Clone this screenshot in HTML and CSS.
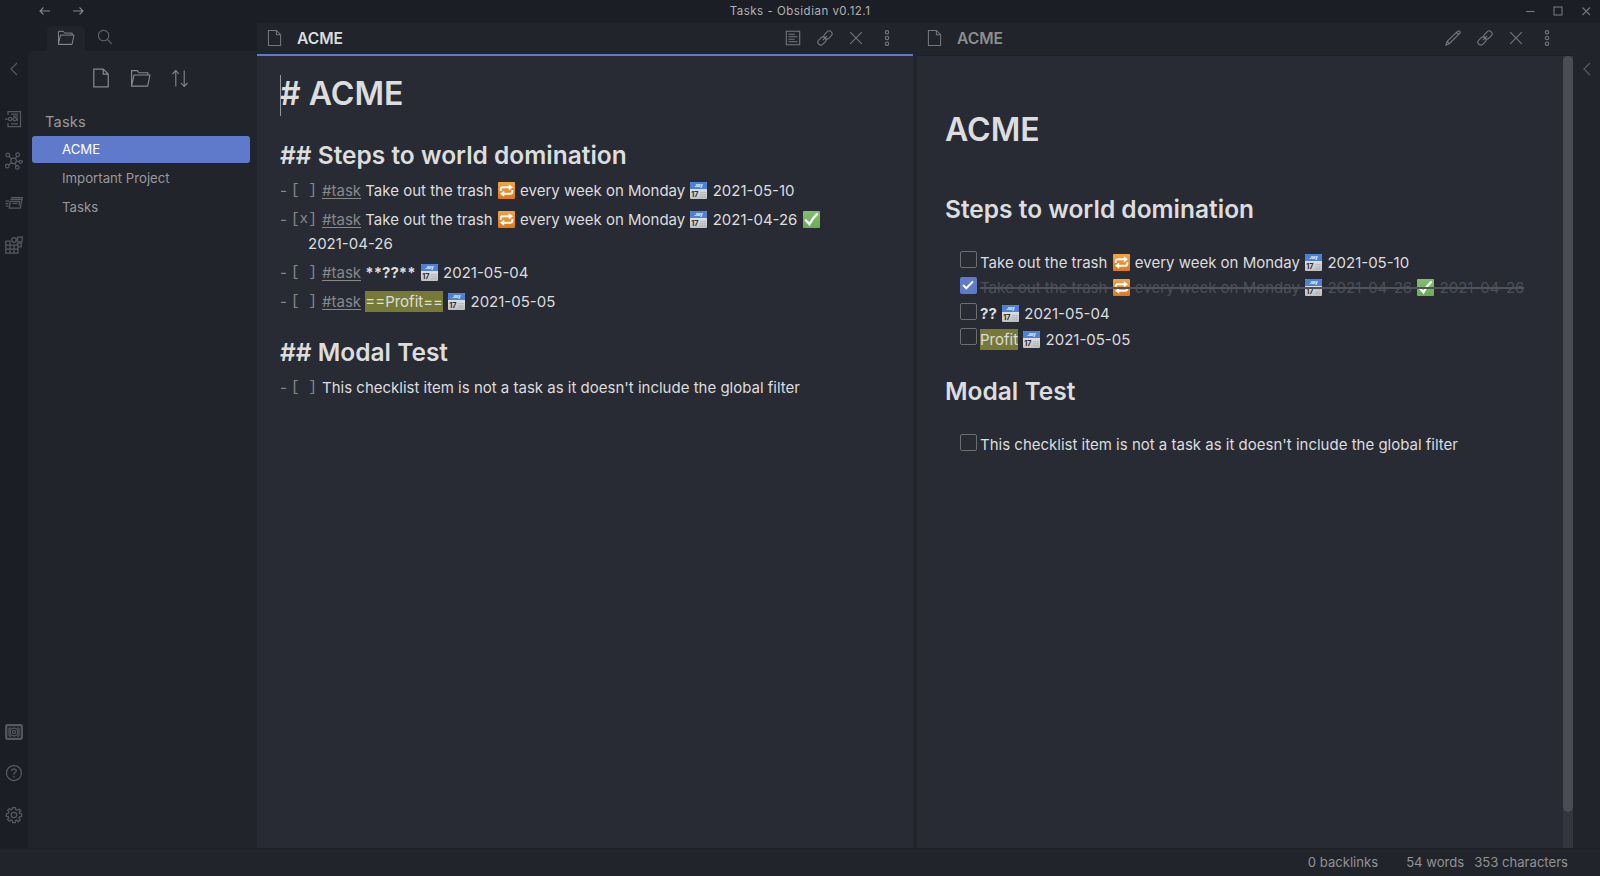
FILE: index.html
```html
<!DOCTYPE html>
<html lang="en">
<head>
<meta charset="utf-8">
<title>Tasks - Obsidian v0.12.1</title>
<link rel="stylesheet" href="styles.css">
</head>
<body>
<svg class="defs" width="0" height="0">
  <defs>
    <linearGradient id="orange" x2="0" y2="1"><stop stop-color="#f0a544"/><stop offset="1" stop-color="#e0781a"/></linearGradient>
    <linearGradient id="green" x2="0" y2="1"><stop stop-color="#83bd72"/><stop offset="1" stop-color="#68ae50"/></linearGradient>
    <linearGradient id="paper" x2="0" y2="1"><stop stop-color="#f4f4f4"/><stop offset="1" stop-color="#bfc0c2"/></linearGradient>
    <symbol id="repeat" viewBox="0 0 17 17"><rect width="17" height="17" rx="1" fill="url(#orange)"/><g fill="none" stroke="#fff" stroke-width="1.9"><path d="M2.7 9V7.6Q2.7 5.3 5 5.3H11.5"/><path d="M14.3 8V9.4Q14.3 11.7 12 11.7H5.5"/></g><path d="M10.8 2.2 15 5.3 10.8 8.4ZM6.2 8.6 2 11.7 6.2 14.8Z" fill="#fff"/></symbol>
    <symbol id="calendar" viewBox="0 0 17 17"><rect width="17" height="17" rx="1" fill="url(#paper)"/><path d="M1 0H16Q17 0 17 1V7H0V1Q0 0 1 0" fill="#4b82d8"/><text x="8.5" y="5" text-anchor="middle" class="cal-month">July</text><text x="1.2" y="15" class="cal-day">17</text><path d="M10.5 10.5H16M10.5 12.7H16M10.5 14.8H16" stroke="#96979a" stroke-width=".7" stroke-dasharray="1 .7"/></symbol>
    <symbol id="done" viewBox="0 0 17 17"><rect width="17" height="17" rx="1" fill="url(#green)"/><path d="M2.8 9.3 6.5 13.2Q9 8 14 3.2" fill="none" stroke="#fff" stroke-width="2.3" stroke-linecap="round"/></symbol>
    <symbol id="file" viewBox="0 0 16 18"><path d="M1.5 1H10L14.5 5.5V17H1.5ZM10 1V5.5H14.5"/></symbol>
    <symbol id="folder" viewBox="0 0 20 18"><path d="M1.5 16.2V1.5H7L8.5 3.5H17V5.7M1.5 16.2 3.8 5.7H19L16.8 16.2ZM1.5 16.2H16.8"/></symbol>
    <symbol id="link" viewBox="0 0 16 16"><g transform="rotate(-45 8 8)"><rect x="-.8" y="5.1" width="9" height="5.8" rx="2.9"/><rect x="7.8" y="5.1" width="9" height="5.8" rx="2.9"/><path d="M5 8H11"/></g></symbol>
    <symbol id="close" viewBox="0 0 16 16"><path d="M2.2 2.2 13.8 13.8M13.8 2.2 2.2 13.8"/></symbol>
    <symbol id="more" viewBox="0 0 16 16"><circle cx="8" cy="2.3" r="1.7"/><circle cx="8" cy="8" r="1.7"/><circle cx="8" cy="13.7" r="1.7"/></symbol>
    <symbol id="left" viewBox="0 0 8 14"><path d="M7 1 1 7 7 13"/></symbol>
  </defs>
</svg>

<header class="titlebar">
  <div class="nav">
    <svg class="icon" width="12" height="10" viewBox="0 0 12 10"><path d="M11 5H1M4.5 1.5 1 5 4.5 8.5"/></svg>
    <svg class="icon" width="12" height="10" viewBox="0 0 12 10"><path d="M1 5H11M7.5 1.5 11 5 7.5 8.5"/></svg>
  </div>
  <div class="title">Tasks - Obsidian v0.12.1</div>
  <div class="window-buttons">
    <svg class="icon" width="10" height="10" viewBox="0 0 10 10"><path d="M1 5.5H9.5"/></svg>
    <svg class="icon" width="10" height="10" viewBox="0 0 10 10"><rect x="1" y="1" width="8" height="8"/></svg>
    <svg class="icon" width="10" height="10" viewBox="0 0 10 10"><path d="M1.5 1.5 9 9M9 1.5 1.5 9"/></svg>
  </div>
</header>

<main class="workspace">
  <nav class="ribbon">
    <svg class="icon collapse" width="8" height="14"><use href="#left"/></svg>
    <div class="ribbon-top">
      <svg class="icon" width="18" height="18" viewBox="0 0 18 18"><path d="M3 5V1.5H15.5V16.5H3V13M6 4H13M8 6.2H13M6 13.8H13M0 9H3.5M12.3 7.5V11M7 9H8"/><circle cx="5.2" cy="9" r="1.7"/><circle cx="9.8" cy="9.2" r="1.7"/></svg>
      <svg class="icon" width="18" height="18" viewBox="0 0 18 18"><circle cx="8.6" cy="8.8" r="2.8"/><circle cx="2.8" cy="3" r="1.8"/><circle cx="12.7" cy="2.7" r="1.8"/><circle cx="15.8" cy="9.8" r="1.5"/><circle cx="2.3" cy="14" r="1.8"/><circle cx="12.3" cy="15.4" r="1.8"/><path d="M4 4.4 6.5 6.8M11.8 4.3 10.2 6.6M11.5 9.2 14.3 9.6M6.6 11 3.8 12.8M9.8 11.4 11.5 13.8"/></svg>
      <svg class="icon" width="18" height="18" viewBox="0 0 18 18"><path d="M6 3.5H17.3L15.3 14H4.3L5.3 7.3H14.7L14 11.5M5.5 5.4H17M7.5 9.3H12.5M.5 7H4M.5 9.5H3.5M1 12H3.5"/></svg>
      <svg class="icon" width="18" height="18" viewBox="0 0 18 18"><path d="M.8 5H5V17H.8ZM5 9.2H13V17H5M9 9.2V17M.8 9.2H5M.8 13H13M12.4 1.3 17.3 1 17 5.6 12.8 5.9ZM12.4 7.5 16 7 16.5 10.6 13.5 11.2Z"/><circle cx="9" cy="4" r="2.3"/></svg>
    </div>
    <div class="ribbon-bottom">
      <svg class="icon" width="18" height="16" viewBox="0 0 18 16"><rect x="1.2" y="1.2" width="15.6" height="13.6" rx="1" stroke-width="2.2"/><path d="M4 4V12M14 4V12M4 4H6M4 12H6M12 4H14M12 12H14"/><circle cx="9" cy="8" r="3.8"/><circle cx="9" cy="8" r="1.6"/></svg>
      <svg class="icon" width="18" height="18" viewBox="0 0 18 18"><circle cx="9" cy="9" r="7.5"/><path d="M6.7 7Q6.8 4.8 9 4.8T11.3 7Q11.3 8.2 9 9.3V11M9 12V13.5"/></svg>
      <svg class="icon" width="18" height="18" viewBox="0 0 18 18"><circle cx="9" cy="9" r="2.7"/><path d="M7.6 1.5H10.4L10.8 3.7 12.2 4.3 14.1 3 15.9 4.8 14.1 6.5 14.5 7.4 16.6 7.7V10.4L14.5 10.8 13.9 12.1 15.2 14 13.3 15.8 11.8 14.1 10.6 14.6 10.3 16.6H7.7L7.3 14.5 6 14 4.3 15.2 2.5 13.5 3.8 11.9 3.4 10.7 1.4 10.4V7.7L3.5 7.3 4 6 2.7 4.3 4.5 2.6 6.1 3.9 7.2 3.4Z"/></svg>
    </div>
  </nav>

  <aside class="sidebar">
    <div class="tabs">
      <div class="tab active"><svg class="icon" width="18" height="16"><use href="#folder"/></svg></div>
      <div class="tab"><svg class="icon" width="16" height="16" viewBox="0 0 16 16"><circle cx="6.6" cy="6.6" r="5.2"/><path d="M10.5 10.5 14.8 14.8"/></svg></div>
    </div>
    <div class="files">
      <div class="file-actions">
        <svg class="icon" width="18" height="20"><use href="#file"/></svg>
        <svg class="icon" width="21" height="19"><use href="#folder"/></svg>
        <svg class="icon" width="18" height="19" viewBox="0 0 18 19"><path d="M4.8 17.5V1.5M1.5 5 4.8 1.5 8 5M13.2 1.5V17.5M10 14 13.2 17.5 16.5 14"/></svg>
      </div>
      <div class="vault">Tasks</div>
      <div class="file selected">ACME</div>
      <div class="file">Important Project</div>
      <div class="file">Tasks</div>
    </div>
  </aside>

  <section class="pane editing">
    <div class="pane-head">
      <svg class="icon" width="15" height="18"><use href="#file"/></svg>
      <span class="pane-title">ACME</span>
      <div class="pane-actions">
        <svg class="icon" width="16" height="16" viewBox="0 0 16 16"><path d="M1.3 1.3H14.7V14.7H1.3ZM3.5 4.2H10M3.5 6.7H12.5M3.5 9.2H9.5M3.5 11.7H12.5"/></svg>
        <svg class="icon" width="16" height="16"><use href="#link"/></svg>
        <svg class="icon" width="16" height="16"><use href="#close"/></svg>
        <svg class="icon" width="16" height="16"><use href="#more"/></svg>
      </div>
    </div>
    <div class="source">
      <div class="line h1"><span class="caret"></span># ACME</div>
      <div class="line h2">## Steps to world domination</div>
      <div class="line"><span class="mark">-<code>[ ]</code></span><u>#task</u> Take out the trash <svg class="emoji"><use href="#repeat"/></svg> every week on Monday <svg class="emoji"><use href="#calendar"/></svg> 2021-05-10</div>
      <div class="line"><span class="mark">-<code>[x]</code></span><u>#task</u> Take out the trash <svg class="emoji"><use href="#repeat"/></svg> every week on Monday <svg class="emoji"><use href="#calendar"/></svg> 2021-04-26 <svg class="emoji"><use href="#done"/></svg></div>
      <div class="line wrapped">2021-04-26</div>
      <div class="line"><span class="mark">-<code>[ ]</code></span><u>#task</u> <b>**??**</b> <svg class="emoji"><use href="#calendar"/></svg> 2021-05-04</div>
      <div class="line"><span class="mark">-<code>[ ]</code></span><u>#task</u> <mark>==Profit==</mark> <svg class="emoji"><use href="#calendar"/></svg> 2021-05-05</div>
      <div class="line h2 second">## Modal Test</div>
      <div class="line"><span class="mark">-<code>[ ]</code></span>This checklist item is not a task as it doesn't include the global filter</div>
    </div>
  </section>

  <section class="pane preview">
    <div class="pane-head">
      <svg class="icon" width="15" height="18"><use href="#file"/></svg>
      <span class="pane-title">ACME</span>
      <div class="pane-actions">
        <svg class="icon" width="16" height="16" viewBox="0 0 16 16"><path d="M1 15 2.2 11.3 12.8 1.2Q14 .4 14.8 1.5T14.5 3.5L4.3 13.7ZM2.2 11.3 4.3 13.7M11.5 2.5 13.5 4.5"/></svg>
        <svg class="icon" width="16" height="16"><use href="#link"/></svg>
        <svg class="icon" width="16" height="16"><use href="#close"/></svg>
        <svg class="icon" width="16" height="16"><use href="#more"/></svg>
      </div>
    </div>
    <div class="preview-body">
      <article class="rendered">
        <h1>ACME</h1>
        <h2>Steps to world domination</h2>
        <ul>
          <li><i class="box"></i><span>Take out the trash <svg class="emoji"><use href="#repeat"/></svg> every week on Monday <svg class="emoji"><use href="#calendar"/></svg> 2021-05-10</span></li>
          <li class="checked"><i class="box"><svg width="16" height="16" viewBox="0 0 16 16"><path d="M3 8 6.3 11.3 13 4.4" fill="none" stroke="#fff" stroke-width="2"/></svg></i><span class="struck">Take out the trash <svg class="emoji"><use href="#repeat"/></svg> every week on Monday <svg class="emoji"><use href="#calendar"/></svg> 2021-04-26 <svg class="emoji"><use href="#done"/></svg> 2021-04-26</span></li>
          <li><i class="box"></i><span><b>??</b> <svg class="emoji"><use href="#calendar"/></svg> 2021-05-04</span></li>
          <li><i class="box"></i><span><mark>Profit</mark> <svg class="emoji"><use href="#calendar"/></svg> 2021-05-05</span></li>
        </ul>
        <h2 class="second">Modal Test</h2>
        <ul>
          <li><i class="box"></i><span>This checklist item is not a task as it doesn't include the global filter</span></li>
        </ul>
      </article>
      <div class="scrollbar"><div class="thumb"></div></div>
    </div>
  </section>

  <nav class="ribbon right"><svg class="icon collapse" width="8" height="14"><use href="#left"/></svg></nav>
</main>

<footer class="status"><span class="backlinks">0 backlinks</span><span class="words">54 words</span><span class="chars">353 characters</span></footer>
</body>
</html>
```
FILE: styles.css
```css
* { box-sizing: border-box; }
body {
  margin: 0;
  width: 1600px;
  height: 876px;
  overflow: hidden;
  display: flex;
  flex-direction: column;
  background: #1b1e25;
  color: #dcddde;
  font-family: Inter, "Liberation Sans", sans-serif;
  font-size: 15px;
}
svg { flex: none; display: block; }
.defs { position: absolute; }
.icon { fill: none; stroke: currentColor; stroke-width: 1.1; }

.titlebar { height: 23px; flex: none; display: grid; grid-template-columns: 257px 1fr 257px; align-items: center; padding-bottom: 2px; color: #85878a; }
.nav { display: flex; gap: 21px; padding-left: 39px; }
.title { text-align: center; font-size: 11.5px; letter-spacing: .5px; color: #b2b3b5; }
.window-buttons { display: flex; gap: 18px; justify-content: flex-end; padding-right: 9px; color: #75777b; }

.workspace { height: 825px; flex: none; display: flex; }
.ribbon { width: 28px; display: flex; flex-direction: column; align-items: center; padding-top: 39px; color: #565962; }
.ribbon .icon { stroke-width: 1.25; }
.ribbon.right { width: 27px; background: #21242b; }
.ribbon-top { display: flex; flex-direction: column; gap: 24px; padding-top: 34px; }
.ribbon-bottom { display: flex; flex-direction: column; gap: 24px; margin-top: auto; padding-bottom: 24px; }

.sidebar { width: 229px; display: flex; flex-direction: column; }
.tabs { height: 28px; display: flex; padding-left: 19px; color: #62656b; }
.tab { width: 38px; display: flex; align-items: center; justify-content: center; padding: 0 0 0 2px; }
.tab.active { background: #21242b; color: #85878b; border-radius: 5px 5px 0 0; margin-top: 3px; padding: 0 0 2px; }
.files { flex: 1; background: #21242b; border-radius: 4px 0 0 0; padding: 17px 7px 0 4px; color: #999a9c; }
.file-actions { display: flex; align-items: center; gap: 20px; height: 20px; padding-left: 60px; color: #858789; }
.vault { font-size: 14.6px; line-height: 24px; height: 24px; padding-left: 13px; margin: 22px 0 2px; letter-spacing: .2px; }
.file { height: 27px; line-height: 27px; padding-left: 30px; font-size: 13.2px; margin-bottom: 2px; border-radius: 3px; }
.file.selected { background: #5f7acb; color: #fff; }

.pane { width: 660px; display: flex; flex-direction: column; background: #282b34; border-right: 4px solid #21242b; }
.pane.preview { width: 656px; border: 0; }
.pane-head { height: 33px; flex: none; display: flex; align-items: center; padding: 0 18px 2px 10px; background: #21242b; border-bottom: 1px solid #1b1e25; color: #75777a; }
.pane-title { font-weight: 600; font-size: 15.6px; margin-left: 15px; color: #8d8e90; }
.editing .pane-head { border-bottom: 2px solid #5f7acb; padding-bottom: 1px; }
.editing .pane-title { color: #dcddde; }
.pane-actions { display: flex; gap: 15.2px; margin-left: auto; }

.emoji { display: inline-block; width: 17px; height: 17px; margin: 0 1px; vertical-align: -3px; }
.cal-month { font: italic 700 3.8px Inter, sans-serif; fill: #fff; }
.cal-day { font: 700 7.2px Inter, sans-serif; fill: #2c2d30; }
mark { background: #777a37; color: #dcddde; padding: 1px 0; }
b { font-weight: 700; }

.source { padding: 18px 0 0 23px; white-space: nowrap; }
.line { height: 28.9px; line-height: 29px; }
.line.h1 { height: 42px; line-height: 39px; font-size: 32.1px; font-weight: 600; position: relative; }
.caret { position: absolute; left: 0; top: 1px; width: 1px; height: 41px; background: #96979a; }
.line.h2 { height: 60px; padding-top: 21px; line-height: 37px; font-size: 24.5px; font-weight: 600; }
.line.h2.second { padding-top: 18.4px; height: 57px; }
.line.wrapped { height: 24.3px; line-height: 20px; padding-left: 28px; }
.mark { color: #87888b; display: inline-flex; width: 42px; }
.mark code { font: 14.4px "Liberation Mono", monospace; line-height: inherit; margin-left: 4px; }
u { color: #87888b; text-underline-offset: 2px; }

.preview-body { flex: 1; display: flex; }
.rendered { flex: 1; padding-left: 28px; white-space: nowrap; }
h1 { font-size: 32.1px; font-weight: 600; line-height: 40px; margin: 54px 0 0; }
h2 { font-size: 24.5px; font-weight: 600; line-height: 30px; margin: 44px 0 24.6px; }
h2.second { margin: 24.2px 0 25.4px; }
ul { list-style: none; margin: 0; padding: 0 0 0 15px; }
li { display: flex; height: 25.8px; line-height: 27px; }
.box { width: 17px; height: 17px; flex: none; border: 1px solid #6c6e72; border-radius: 2px; margin: 2.5px 3px 0 0; }
.checked .box { background: #5f7acb; border: 0; }
.checked { color: #4c4f58; }
.struck { position: relative; }
.struck::after { content: ""; position: absolute; left: 0; right: 0; top: 13px; height: 2px; background: #50535c; }
.scrollbar { width: 10px; background: #33363f; }
.thumb { height: 756px; border-radius: 5px; background: #4a4d54; }

.status { height: 28px; flex: none; display: flex; justify-content: flex-end; align-items: center; padding: 0 32px 1px 0; background: #21242b; border-top: 1px solid #1e2128; color: #929395; font-size: 13.1px; }
.words { margin: 0 10px 0 28px; }
```
